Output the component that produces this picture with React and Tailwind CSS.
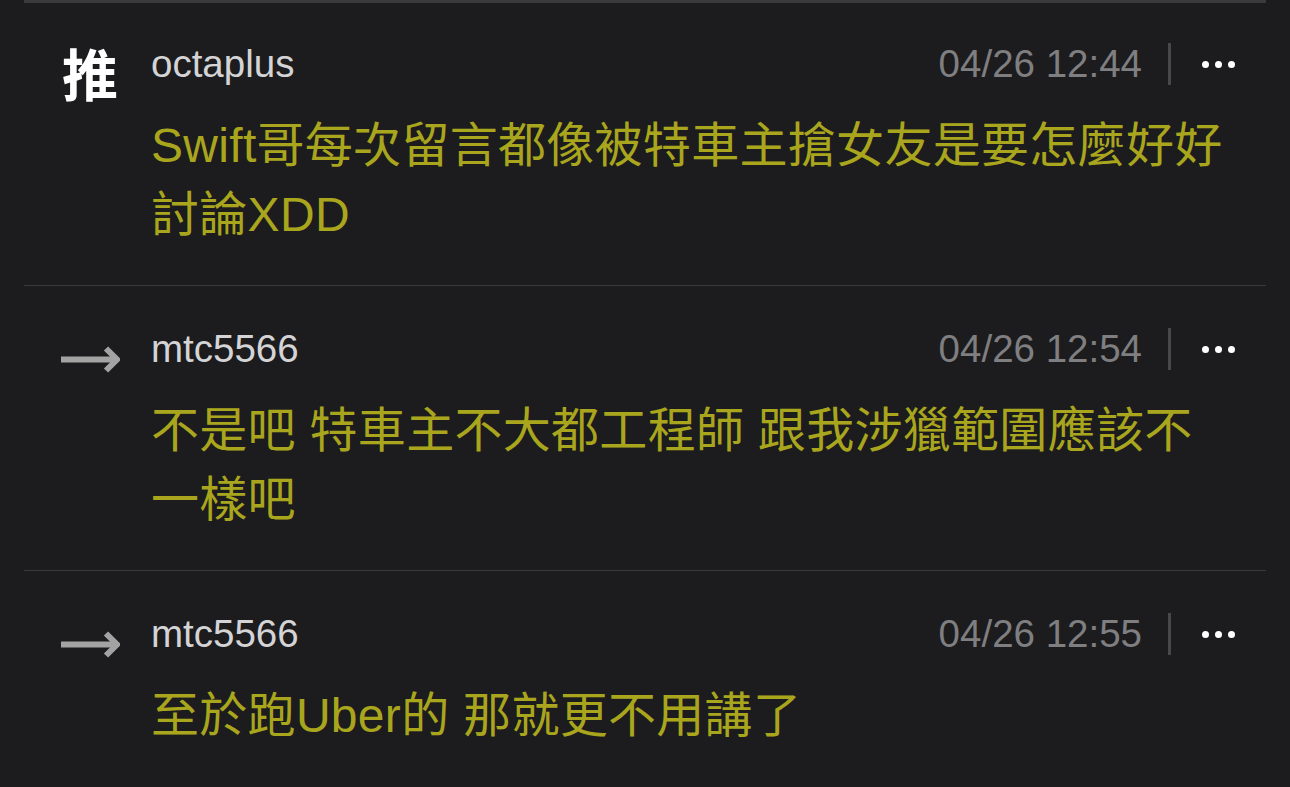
const comments = [
  {
    tag: 'push',
    user: 'octaplus',
    time: '04/26 12:44',
    lines: ['Swift哥每次留言都像被特車主搶女友是要怎麼好好', '討論XDD'],
  },
  {
    tag: 'arrow',
    user: 'mtc5566',
    time: '04/26 12:54',
    lines: ['不是吧 特車主不大都工程師 跟我涉獵範圍應該不', '一樣吧'],
  },
  {
    tag: 'arrow',
    user: 'mtc5566',
    time: '04/26 12:55',
    lines: ['至於跑Uber的 那就更不用講了'],
  },
]

const latin = { fontFamily: '"Liberation Sans", "Noto Sans CJK TC", sans-serif' }

function Tag({ type }) {
  if (type === 'push') {
    return (
      <div
        className="mt-[5px] h-[56px] text-[56px] leading-[56px] font-bold text-white"
        style={{ fontFamily: '"Noto Sans CJK TC", sans-serif' }}
      >
        推
      </div>
    )
  }
  return (
    <svg className="mt-[22px] -ml-[1px]" width="59" height="27" viewBox="0 0 59 27" fill="none">
      <line x1="0" y1="13.5" x2="55" y2="13.5" stroke="#a3a3a3" strokeWidth="6" />
      <polyline points="45,2.5 56,13.5 45,24.5" stroke="#a3a3a3" strokeWidth="6" fill="none" />
    </svg>
  )
}

function Comment({ c, first }) {
  return (
    <div className={first ? 'flex pt-[36px] pb-[36px]' : 'flex border-t border-[#3a3a3c] pt-[38px] pb-[36px]'}>
      {/* push / arrow column */}
      <div className="w-[127px] shrink-0 pl-[38px]">
        <Tag type={c.tag} />
      </div>

      <div className="flex-1 pr-[31px]">
        <div className="flex h-[50px] items-center" style={latin}>
          <span className="text-[38.5px] leading-[50px] text-[#d4d4d6]">{c.user}</span>
          <span className="ml-auto text-[38.5px] leading-[50px] text-[#7f7f81]">{c.time}</span>
          <span className="ml-[26px] h-[42px] w-[3px] bg-[#48484a]" />
          <span className="ml-[31px] flex gap-[6px]">
            <span className="h-[7px] w-[7px] rounded-full bg-white" />
            <span className="h-[7px] w-[7px] rounded-full bg-white" />
            <span className="h-[7px] w-[7px] rounded-full bg-white" />
          </span>
        </div>

        <div className="mt-[22px]" style={latin}>
          {c.lines.map((line, i) => (
            <div
              key={i}
              className="h-[69px] whitespace-nowrap text-[48px] leading-[69px] tracking-[0.3px] text-[#a9a61e]"
            >
              {line}
            </div>
          ))}
        </div>
      </div>
    </div>
  )
}

export default function App() {
  return (
    <div className="h-[787px] w-full overflow-hidden bg-[#1c1c1e]">
      <div className="mx-[24px]">
        <div className="h-[3px] bg-[#3a3a3c]" />
        {comments.map((c, i) => (
          <Comment key={i} c={c} first={i === 0} />
        ))}
      </div>
    </div>
  )
}
